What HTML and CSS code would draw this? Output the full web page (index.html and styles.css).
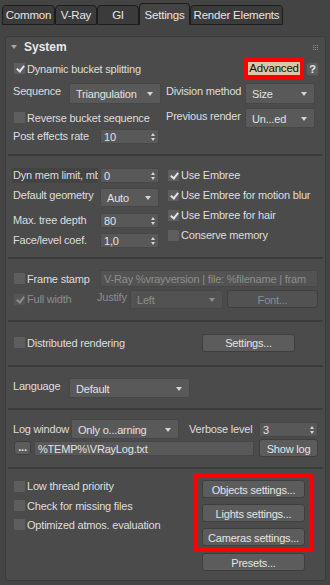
FILE: index.html
```html
<!DOCTYPE html>
<html lang="en">
<head>
  <meta charset="UTF-8" />
  <title>Render Setup - Settings</title>
  <link rel="stylesheet" href="styles.css">
</head>
<body>
  <div class="tabs">
    <div class="tab t-common">Common</div>
    <div class="tab t-vray">V-Ray</div>
    <div class="tab t-gi">GI</div>
    <div class="tab t-settings active">Settings</div>
    <div class="tab t-elements">Render Elements</div>
  </div>

  <div class="panel">
    <div class="panel-head">
      <span class="caret"></span>
      <span class="title">System</span>
      <svg class="grip" width="5" height="5" viewBox="0 0 5 5">
        <g fill="#8c8c8c">
          <rect x="0" y="0" width="1" height="1"/><rect x="2" y="0" width="1" height="1"/><rect x="4" y="0" width="1" height="1"/>
          <rect x="0" y="2" width="1" height="1"/><rect x="2" y="2" width="1" height="1"/><rect x="4" y="2" width="1" height="1"/>
          <rect x="0" y="4" width="1" height="1"/><rect x="2" y="4" width="1" height="1"/><rect x="4" y="4" width="1" height="1"/>
        </g>
      </svg>
    </div>

    <!-- buckets -->
    <div class="sec sec-buckets">
      <div class="row r-dyn">
        <div class="check on"><span class="box"></span>Dynamic bucket splitting</div>
        <div class="mark mark-adv"><div class="adv">Advanced</div></div>
        <div class="btn help">?</div>
      </div>
      <div class="row r-seq">
        <div class="lbl up w56">Sequence</div>
        <div class="drop w92">Triangulation</div>
        <div class="lbl up w79 gap5">Division method</div>
        <div class="drop w70">Size</div>
      </div>
      <div class="row r-rev">
        <div class="check w153"><span class="box"></span>Reverse bucket sequence</div>
        <div class="lbl up w79">Previous render</div>
        <div class="drop w70 h20">Un...ed</div>
      </div>
      <div class="row r-post">
        <div class="lbl w87">Post effects rate</div>
        <div class="spin w59">10<span class="ud"></span></div>
      </div>
    </div>
    <div class="sep"></div>

    <!-- geometry / embree -->
    <div class="sec sec-geom">
      <div class="cols">
        <div class="col-left">
          <div class="row r-mem">
            <div class="lbl dark">Dyn mem limit, mb</div>
            <div class="spin w59">0<span class="ud"></span></div>
          </div>
          <div class="row r-geo">
            <div class="lbl up w87">Default geometry</div>
            <div class="drop w59 h19">Auto</div>
          </div>
          <div class="row r-20">
            <div class="lbl w87">Max. tree depth</div>
            <div class="spin w59">80<span class="ud"></span></div>
          </div>
          <div class="row r-20">
            <div class="lbl w87">Face/level coef.</div>
            <div class="spin w59">1,0<span class="ud"></span></div>
          </div>
        </div>
        <div class="col-right">
          <div class="crow"><div class="check on"><span class="box"></span>Use Embree</div></div>
          <div class="crow"><div class="check on"><span class="box"></span>Use Embree for motion blur</div></div>
          <div class="crow"><div class="check on"><span class="box"></span>Use Embree for hair</div></div>
          <div class="crow"><div class="check"><span class="box"></span>Conserve memory</div></div>
        </div>
      </div>
    </div>
    <div class="sep"></div>

    <!-- frame stamp -->
    <div class="sec sec-stamp">
      <div class="row r-stamp">
        <div class="check w87"><span class="box"></span>Frame stamp</div>
        <div class="field off w218">V-Ray %vrayversion | file: %filename | fram</div>
      </div>
      <div class="row r-just">
        <div class="check on off w84"><span class="box"></span>Full width</div>
        <div class="lbl up off w33">Justify</div>
        <div class="drop off w93 h19">Left</div>
        <div class="btn off w91 gap4">Font...</div>
      </div>
    </div>
    <div class="sep"></div>

    <!-- distributed -->
    <div class="sec sec-dr">
      <div class="row r-dr">
        <div class="check w189"><span class="box"></span>Distributed rendering</div>
        <div class="btn w93">Settings...</div>
      </div>
    </div>
    <div class="sep"></div>

    <!-- language -->
    <div class="sec sec-lang">
      <div class="row r-lang">
        <div class="lbl up w56">Language</div>
        <div class="drop w121 h20">Default</div>
      </div>
    </div>
    <div class="sep"></div>

    <!-- log -->
    <div class="sec sec-log">
      <div class="row r-logwin">
        <div class="lbl w58">Log window</div>
        <div class="drop w108 h20">Only o...arning</div>
        <div class="lbl w70 gap10">Verbose level</div>
        <div class="spin w59">3<span class="ud"></span></div>
      </div>
      <div class="row r-logfile">
        <div class="btn dots">...</div>
        <div class="field w220 gap3">%TEMP%\VRayLog.txt</div>
        <div class="btn w59 h15 gap5">Show log</div>
      </div>
    </div>
    <div class="sep"></div>

    <!-- misc -->
    <div class="sec sec-misc">
      <div class="misc-left">
        <div class="row r-20"><div class="check"><span class="box"></span>Low thread priority</div></div>
        <div class="row r-19"><div class="check"><span class="box"></span>Check for missing files</div></div>
        <div class="row r-19"><div class="check"><span class="box"></span>Optimized atmos. evaluation</div></div>
      </div>
      <div class="misc-right">
        <div class="mark mark-group">
          <div class="btn w103">Objects settings...</div>
          <div class="btn w103">Lights settings...</div>
          <div class="btn w103">Cameras settings...</div>
        </div>
        <div class="btn w103 presets">Presets...</div>
      </div>
    </div>
  </div>
</body>
</html>
```

FILE: styles.css
```css
* {
  box-sizing: border-box;
}

body {
  margin: 0;
  width: 330px;
  height: 585px;
  overflow: hidden;
  background: #444444;
  color: #dedede;
  font-family: "Liberation Sans", Arial, sans-serif;
  font-size: 11px;
  letter-spacing: -0.2px;
}

/* Tab strip */
.tabs {
  display: flex;
  align-items: flex-end;
  height: 25px;
  padding-left: 2px;
}

.tab {
  flex-shrink: 0;
  height: 20px;
  display: flex;
  align-items: center;
  justify-content: center;
  background: #3b3b3b;
  border: 1px solid #1d1d1d;
  border-radius: 4px 4px 0 0;
  color: #e6e6e6;
  font-size: 11.5px;
}

.tab.active {
  height: 22px;
  background: #444444;
  border-bottom: none;
}

.t-common { width: 53px; }
.t-vray { width: 42px; }
.t-gi { width: 42px; }
.t-settings { width: 51px; }
.t-elements { width: 93px; }

/* Rollout panel */
.panel {
  margin: 11px 4px 0 5px;
  height: 545px;
  background: #4b4b4b;
  border: 1px solid #3a3a3a;
  border-radius: 3px;
  overflow: hidden;
}

.panel-head {
  display: flex;
  align-items: center;
  height: 20px;
  padding: 0 7px 0 5px;
}

.caret {
  width: 0;
  height: 0;
  border-left: 3px solid transparent;
  border-right: 3px solid transparent;
  border-top: 4px solid #a5a5a5;
  margin-right: 7px;
}

.title {
  font-weight: bold;
  font-size: 12px;
  letter-spacing: 0;
  color: #e8e8e8;
}

.grip {
  margin-left: auto;
}

.sep {
  height: 2px;
  margin: 0 2px;
  background: #3b3b3b;
}

.sec-buckets { padding-bottom: 11px; }
.sec-geom { padding: 10px 0 7px; }
.sec-stamp { padding: 10px 0 10px; }
.sec-dr { padding: 10px 0 12px; }
.sec-lang { padding: 9px 0 9px; }
.sec-log { padding: 8px 0 11px; }
.sec-misc { padding-top: 5px; display: flex; }

.row {
  display: flex;
  align-items: center;
  padding: 0 6px 0 7px;
  white-space: nowrap;
}

.row > * {
  flex-shrink: 0;
}

.r-dyn { height: 23px; }
.r-seq { height: 26px; }
.r-rev { height: 23px; }
.r-post { height: 14px; }
.r-mem { height: 18px; }
.r-geo { height: 26px; }
.r-20 { height: 20px; }
.r-19 { height: 19px; }
.r-stamp { height: 19px; }
.r-just { height: 22px; }
.r-dr { height: 21px; }
.r-lang { height: 23px; }
.r-logwin { height: 22px; }
.r-logfile { height: 16px; }

.cols {
  display: flex;
}

.col-left {
  width: 161px;
}

.col-right {
  margin-top: -1px;
}

.crow {
  height: 20px;
  display: flex;
  align-items: center;
  white-space: nowrap;
}

/* Labels */
.lbl {
  overflow: hidden;
  white-space: nowrap;
}

.lbl.up {
  margin-bottom: 4px;
}

.lbl.dark {
  width: 86px;
  height: 15px;
  line-height: 15px;
  margin: 0 2px 0 -1px;
  padding-left: 1px;
  background: #434343;
}

.off {
  color: #8d8d8d;
}

/* Checkboxes */
.check {
  display: flex;
  align-items: center;
  white-space: nowrap;
}

.box {
  position: relative;
  width: 11px;
  height: 11px;
  margin: 0 2px 0 1px;
  background: #5e5e5e;
  flex-shrink: 0;
}

.check.on .box::after {
  content: "";
  position: absolute;
  left: 4px;
  top: 1px;
  width: 3px;
  height: 6px;
  border: solid #e2e2e2;
  border-width: 0 2px 2px 0;
  transform: rotate(38deg);
}

.check.off .box {
  background: #555555;
}

.check.on.off .box::after {
  border-color: #8d8d8d;
}

/* Dropdowns */
.drop {
  display: flex;
  align-items: center;
  height: 21px;
  padding: 2px 7px 0 6px;
  background: #595959;
  border: 1px solid #474747;
  border-radius: 2px;
  color: #e2e2e2;
}

.drop::after {
  content: "";
  margin-left: auto;
  border-left: 3px solid transparent;
  border-right: 3px solid transparent;
  border-top: 4px solid #d6d6d6;
}

.drop.off {
  background: #525252;
  color: #8d8d8d;
}

.drop.off::after {
  border-top-color: #8d8d8d;
}

.h19 { height: 19px; }
.h20 { height: 20px; }
.h15 { height: 15px; }

/* Spinners */
.spin {
  display: flex;
  align-items: center;
  height: 15px;
  padding: 1px 3px 0 3px;
  background: #585858;
  border: 1px solid #474747;
  color: #e2e2e2;
}

.ud {
  margin-left: auto;
  display: flex;
  flex-direction: column;
  gap: 2px;
}

.ud::before,
.ud::after {
  content: "";
  border-left: 2.5px solid transparent;
  border-right: 2.5px solid transparent;
}

.ud::before {
  border-bottom: 3px solid #d6d6d6;
}

.ud::after {
  border-top: 3px solid #d6d6d6;
}

/* Text fields */
.field {
  display: flex;
  align-items: center;
  height: 17px;
  padding: 1px 3px 0;
  overflow: hidden;
  background: #595959;
  border: 1px solid #474747;
  color: #e2e2e2;
}

.field.off {
  background: #535353;
  color: #8d8d8d;
}

.r-logfile .field {
  height: 15px;
}

/* Buttons */
.btn {
  display: flex;
  align-items: center;
  justify-content: center;
  height: 18px;
  padding-top: 1px;
  background: #5c5c5c;
  border: 1px solid #3e3e3e;
  border-radius: 3px;
  color: #e4e4e4;
}

.btn.off {
  background: #525252;
  color: #8d8d8d;
}

.help {
  width: 13px;
  height: 14px;
  margin-left: 2px;
  font-weight: bold;
  border-color: #505050;
  background: #5e5e5e;
}

.dots {
  width: 17px;
  height: 14px;
  margin-left: 1px;
  align-items: flex-end;
  padding-bottom: 1px;
  font-weight: bold;
}

.presets {
  margin: 1px 0 0 8px;
}

/* Red highlight frames */
.mark {
  border: 4px solid #ff0000;
}

.mark-adv {
  margin-left: auto;
  width: 60px;
  height: 21px;
}

.adv {
  height: 100%;
  background: #dac8a6;
  color: #111111;
  font-size: 11.5px;
  line-height: 13px;
  text-align: center;
}

.mark-group {
  display: flex;
  flex-direction: column;
  gap: 6px;
  padding: 2px 4px;
}

.misc-left {
  width: 188px;
  padding-top: 2px;
}

.misc-right {
  width: 119px;
}

/* widths */
.w33 { width: 33px; }
.w56 { width: 56px; }
.w58 { width: 58px; }
.w59 { width: 59px; }
.w70 { width: 70px; }
.w79 { width: 79px; }
.w84 { width: 84px; }
.w87 { width: 87px; }
.w91 { width: 91px; }
.w92 { width: 92px; }
.w93 { width: 93px; }
.w103 { width: 103px; }
.w108 { width: 108px; }
.w121 { width: 121px; }
.w153 { width: 153px; }
.w189 { width: 189px; }
.w218 { width: 218px; }
.w220 { width: 220px; }

.gap3 { margin-left: 3px; }
.gap4 { margin-left: 4px; }
.gap5 { margin-left: 5px; }
.gap10 { margin-left: 10px; }
```
